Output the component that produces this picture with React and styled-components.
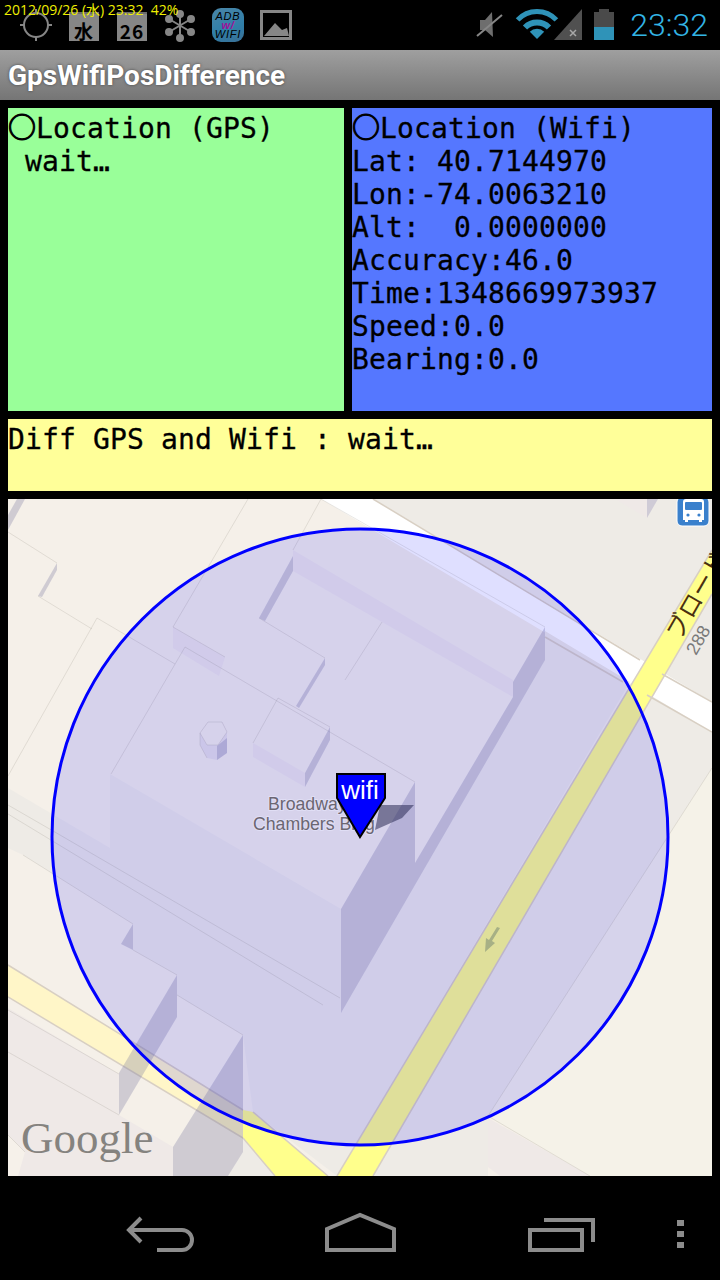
import React from 'react';
import styled, { createGlobalStyle } from 'styled-components';

const GlobalStyle = createGlobalStyle`
  html, body {
    margin: 0;
    padding: 0;
    background-color: #000;
  }
`;

const ICON_GREY = '#868686';
const HOLO_BLUE = '#2f93b8';
const ROAD_EDGE = '#d8cfc3';
const ROOF_LINE = 'rgba(120, 110, 100, 0.16)';
const SHADE = 'rgba(120, 120, 160, 0.3)';

const fills = [
  ['#eeebe6', '373,499 712,499 712,702'],
  ['#eeebe6', '712,730 712,768 488,1116 488,1176 350,1176 640,680'],
  ['#f5f2e8', '712,768 712,1176 590,1176 488,1116'],
  ['#efe9e7', '488,1118 590,1176 500,1176 488,1167'],
  ['#efe9e7', '615,499 647,499 647,518'],
  ['#cfcbd6', '647,499 658,499 647,518'],
  ['#ffffff', '321,499 373,499 712,702 712,732'],
  ['#eeebe6', '8,788 110,848 110,774 341,909 341,1013 545,660 545,631 630,682 337,1176 253,1112 243,1035 177,995 177,975 133,950 133,924 23,855 8,848'],
  ['#efe9e7', '173,627 173,648 219,676 225,657'],
  ['#efe9e7', '293,550 513,680 513,697 293,571'],
  ['#efe9e7', '253,743 305,773 305,787 253,757'],
  ['#efe9e7', '8,1008 119,1074 119,1115 173,1147 173,1176 8,1176'],
  ['#f6f1ea', '8,1135 25,1152 18,1176 8,1176'],
  ['#fff6c8', '8,965 243,1110 243,1138 8,997'],
  ['#ffff8c', '243,1110 253,1112 328,1176 275,1176 243,1138'],
  ['#eeebe6', '243,1138 275,1176 228,1176 243,1152'],
  ['#ffff8c', '712,550 712,594 373,1176 337,1176'],
  ['#e9e3e6', '200,733 208,722 222,722 227,732 227,753 217,760 207,758 200,745'],
  ['#f5f0e9', '200,733 208,722 222,722 227,732 218,745 207,745'],
];

const shades = [
  '341,909 415,782 415,863 513,697 513,682 545,627 545,660 341,1013',
  '119,1073 177,975 177,1017 119,1115',
  '173,1147 243,1035 243,1152 228,1176 173,1176',
  '121,944 133,924 133,950',
  '293,556 293,571 265,621 259,618',
  '325,658 325,665 299,708 296,706',
  '330,727 330,740 305,787 305,773',
  '57,563 57,570 42,597 38,596',
  '8,515 17,499 25,499 8,530',
  '217,746 227,738 227,753 217,760',
];

const roofLines = [
  '248,499 173,627',
  '293,550 321,499',
  '321,499 545,627',
  '173,627 225,657',
  '185,647 415,782',
  '185,647 111,774',
  '259,618 325,658',
  '382,622 345,680',
  '278,698 330,727',
  '278,698 253,743',
  '8,532 57,563',
  '38,596 92,629',
  '97,618 8,776',
  '97,618 175,664',
  '60,835 340,998',
  '8,805 60,835',
  '8,814 323,1005',
  '23,855 133,924',
  '133,950 177,975',
  '177,995 243,1035',
  '8,1052 119,1115',
  '8,1010 119,1074',
  '712,768 488,1116',
  '488,1116 590,1176',
  '8,1135 25,1152',
  '200,745 200,733 208,722 222,722 227,732 218,745 207,745 200,733',
  '200,745 207,758',
];

const roadEdges = [
  '373,499 640,660',
  '662,674 712,702',
  '545,637 623,682',
  '647,695 712,732',
  '712,550 337,1176',
  '712,594 373,1176',
  '8,965 243,1110',
  '8,997 243,1138',
  '253,1112 328,1176',
  '243,1138 275,1176',
];

const gpsLines = [
  'Location (Wifi)',
  'Lat: 40.7144970',
  'Lon:-74.0063210',
  'Alt:  0.0000000',
  'Accuracy:46.0',
  'Time:1348669973937',
  'Speed:0.0',
  'Bearing:0.0',
];

function StatusIcons() {
  return (
    <LeftIcons>
      <Slot>
        <svg width='48' height='50' viewBox='12 0 48 50' fill='none' stroke={ICON_GREY} strokeWidth='2'>
          <circle cx='36' cy='25' r='12' />
          <path d='M36 9v4M36 37v4M20 25h4M48 25h4' />
        </svg>
      </Slot>
      <Slot>
        <CalendarBadge>水</CalendarBadge>
      </Slot>
      <Slot>
        <CalendarBadge>26</CalendarBadge>
      </Slot>
      <Slot>
        <svg width='48' height='50' viewBox='156 0 48 50' stroke={ICON_GREY} strokeWidth='2' fill={ICON_GREY}>
          <path d='M180 14v24M169 19l22 13M169 32l22-13' />
          <circle cx='180' cy='14' r='3' />
          <circle cx='180' cy='38' r='3' />
          <circle cx='169' cy='19' r='3' />
          <circle cx='191' cy='19' r='3' />
          <circle cx='169' cy='32' r='3' />
          <circle cx='191' cy='32' r='3' />
        </svg>
      </Slot>
      <Slot>
        <AdbBadge>
          <span>ADB</span>
          <AdbMark>w/</AdbMark>
          <span>WIFI</span>
        </AdbBadge>
      </Slot>
      <Slot>
        <svg width='48' height='50' viewBox='252 0 48 50'>
          <rect x='261.5' y='11.5' width='29' height='27' fill='none' stroke={ICON_GREY} strokeWidth='3' />
          <path d='M264 36l11-13 7 7 5-2 2 8z' fill={ICON_GREY} />
        </svg>
      </Slot>
    </LeftIcons>
  );
}

function SystemIcons() {
  return (
    <RightIcons>
      <svg width='48' height='50' viewBox='465 0 48 50'>
        <path d='M480 20h5l7-8 1 25-8-7h-5z' fill='#6e6e6e' />
        <path d='M477 36l25-21' stroke={ICON_GREY} strokeWidth='2' />
      </svg>
      <svg width='44' height='50' viewBox='513 0 44 50' overflow='visible' fill='none' stroke={HOLO_BLUE}>
        <path d='M517.6 19.9a26.5 26.5 0 0 1 38.8 0' strokeWidth='5' />
        <path d='M525 27.5a17 17 0 0 1 24 0' strokeWidth='6' />
        <path d='M537 39l-7.2-7.2a10 10 0 0 1 14.4 0z' fill={HOLO_BLUE} stroke='none' />
      </svg>
      <svg width='28' height='50' viewBox='557 0 28 50' overflow='visible'>
        <path d='M582 9v31h-28z' fill='#505050' />
        <path d='M570 30l6 6M576 30l-6 6' stroke='#a8a8a8' strokeWidth='1.5' />
      </svg>
      <svg width='40' height='50' viewBox='585 0 40 50'>
        <path d='M599 9h10v3h5v15h-20v-15h5z' fill='#4a4a4a' />
        <rect x='594' y='27' width='20' height='13' fill={HOLO_BLUE} />
      </svg>
      <Clock>23:32</Clock>
    </RightIcons>
  );
}

function MapView() {
  return (
    <MapPanel>
      <svg width='704' height='677' viewBox='8 499 704 677'>
        <rect x='8' y='499' width='704' height='677' fill='#f5f0e9' />
        {fills.map(([color, points]) => (
          <polygon key={points} points={points} fill={color} />
        ))}
        {roadEdges.map((points) => (
          <polyline key={points} points={points} fill='none' stroke={ROAD_EDGE} strokeWidth='1.5' />
        ))}
        {roofLines.map((points) => (
          <polyline key={points} points={points} fill='none' stroke={ROOF_LINE} />
        ))}
        {shades.map((points) => (
          <polygon key={points} points={points} fill={SHADE} />
        ))}
        <RoadLabel transform='translate(680 641) rotate(-60)'>ブロード</RoadLabel>
        <RoadNumber transform='translate(696 656) rotate(-60)'>288</RoadNumber>
        <polygon points='380,805 414,805 402,818 375,830' fill='rgba(50, 50, 60, 0.55)' />
        <circle cx='360' cy='837' r='308' fill='rgba(0, 0, 255, 0.125)' stroke='#0000ff' strokeWidth='3' />
        <BuildingLabel x='268' y='810'>Broadway</BuildingLabel>
        <BuildingLabel x='253' y='830'>Chambers Bldg</BuildingLabel>
        <path d='M500 928l-8 13 3 2-10 9 1-14 3 2 8-13z' fill='#a7b085' />
        <polygon points='337,774 385,774 385,798 360,837 337,798' fill='#0000ff' stroke='#000' strokeWidth='2' />
        <MarkerText x='360' y='799'>wifi</MarkerText>
        <GoogleMark x='21' y='1153'>Google</GoogleMark>
        <rect x='677' y='497' width='32' height='29' rx='5' fill='#3a80cc' stroke='#fff' />
        <path d='M686 499h15q3 0 3 3v18h-2v2h-3v-2h-11v2h-3v-2h-2v-18q0-3 3-3z' fill='#fff' />
        <rect x='685' y='502' width='17' height='8' rx='1' fill='#3a80cc' />
        <circle cx='688' cy='515' r='1.6' fill='#3a80cc' />
        <circle cx='699' cy='515' r='1.6' fill='#3a80cc' />
      </svg>
    </MapPanel>
  );
}

function App() {
  return (
    <>
      <GlobalStyle />
      <Screen>
        <StatusBar>
          <StatusIcons />
          <SystemIcons />
          <DateOverlay>2012/09/26 (水) 23:32  42%</DateOverlay>
        </StatusBar>
        <TitleBar>GpsWifiPosDifference</TitleBar>
        <Content>
          <Panels>
            <InfoPanel $color='#99ff99'>
              <InfoLine>
                <Ring>○</Ring>Location (GPS)
              </InfoLine>
              <InfoLine> wait…</InfoLine>
            </InfoPanel>
            <InfoPanel $color='#5577ff'>
              {gpsLines.map((line, i) => (
                <InfoLine key={line}>
                  {i === 0 && <Ring>○</Ring>}
                  {line}
                </InfoLine>
              ))}
            </InfoPanel>
          </Panels>
          <DiffPanel>
            <InfoLine>Diff GPS and Wifi : wait…</InfoLine>
          </DiffPanel>
          <MapView />
        </Content>
        <NavBar>
          <svg width='720' height='104' viewBox='0 1176 720 104' fill='none' stroke='#8c8c8c' strokeWidth='4'>
            <path d='M141 1218l-12 12 12 12M130 1230h52a10 10 0 0 1 0 20h-25' />
            <path d='M327 1250v-21l33-14 34 14v21z' />
            <path d='M530 1230h52v20h-52z' />
            <path d='M544 1220h49v22' />
            <path d='M677 1223h7M677 1234h7M677 1245h7' strokeWidth='6' />
          </svg>
        </NavBar>
      </Screen>
    </>
  );
}

const Screen = styled.div`
  display: flex;
  flex-direction: column;
  width: 720px;
  height: 1280px;
  overflow: hidden;
  background-color: #000;
`;

const StatusBar = styled.header`
  position: relative;
  display: flex;
  justify-content: space-between;
  height: 50px;
  background-color: #000;
`;

const LeftIcons = styled.div`
  display: flex;
  padding-left: 12px;
`;

const Slot = styled.div`
  display: flex;
  justify-content: center;
  width: 48px;
  height: 50px;
`;

const CalendarBadge = styled.div`
  width: 30px;
  height: 29px;
  margin-top: 12px;
  padding-top: 6px;
  border-top: 2px solid #6c6c6c;
  box-sizing: border-box;
  background-color: ${ICON_GREY};
  color: #000;
  font-family: 'Noto Sans CJK JP', 'Liberation Sans', sans-serif;
  font-size: 19px;
  font-weight: 700;
  letter-spacing: 1px;
  line-height: 21px;
  text-align: center;
`;

const AdbBadge = styled.div`
  display: flex;
  flex-direction: column;
  align-items: center;
  width: 32px;
  height: 34px;
  margin-top: 8px;
  padding-top: 4px;
  box-sizing: border-box;
  border-radius: 9px;
  background: linear-gradient(160deg, #4a86a8, #2f7ea8 60%, #3a6f95);
  color: #000;
  font-family: 'Liberation Sans', sans-serif;
  font-size: 11px;
  font-style: italic;
  letter-spacing: 0.8px;
  line-height: 9px;
`;

const AdbMark = styled.span`
  color: #a0109a;
  font-weight: 700;
`;

const RightIcons = styled.div`
  display: flex;
  padding-right: 12px;
`;

const Clock = styled.span`
  width: 83px;
  color: #33b5e5;
  font-family: Roboto, sans-serif;
  font-size: 32px;
  font-weight: 300;
  line-height: 51px;
  text-align: right;
`;

const DateOverlay = styled.span`
  position: absolute;
  top: 1px;
  left: 4px;
  color: #efef00;
  font-family: 'Open Sans', 'Noto Sans CJK JP', sans-serif;
  font-size: 14px;
  line-height: 18px;
  white-space: pre;
`;

const TitleBar = styled.h1`
  height: 50px;
  margin: 0;
  padding-left: 8px;
  background: linear-gradient(#9f9f9f, #757575);
  color: #fff;
  font-family: Roboto, sans-serif;
  font-size: 28px;
  font-weight: 700;
  line-height: 52px;
  text-shadow: 0 0 3px #444;
`;

const Content = styled.main`
  display: flex;
  flex-direction: column;
  gap: 8px;
  padding: 8px 8px 0;
`;

const Panels = styled.section`
  display: grid;
  grid-template-columns: 336px 360px;
  gap: 8px;
  height: 303px;
`;

const InfoPanel = styled.div`
  background-color: ${(props) => props.$color};
`;

const InfoLine = styled.div`
  height: 33px;
  color: #000;
  font-family: 'DejaVu Sans Mono', monospace;
  font-size: 28px;
  letter-spacing: 0.14px;
  line-height: 42px;
  white-space: pre;
  -webkit-text-stroke: 0.3px #000;
`;

const Ring = styled.span`
  font-family: 'Noto Sans CJK JP', sans-serif;
  font-weight: 700;
  letter-spacing: 0;
  line-height: 1;
  -webkit-text-stroke: 1px #000;
`;

const DiffPanel = styled.div`
  height: 72px;
  background-color: #ffff99;
`;

const MapPanel = styled.section`
  height: 677px;
  line-height: 0;
`;

const BuildingLabel = styled.text`
  fill: #6b6672;
  stroke: rgba(235, 235, 255, 0.5);
  stroke-width: 2px;
  paint-order: stroke;
  font-family: 'Liberation Sans', sans-serif;
  font-size: 17.7px;
`;

const RoadLabel = styled.text`
  fill: #4a2f10;
  font-family: 'Noto Sans CJK JP', sans-serif;
  font-size: 24px;
`;

const RoadNumber = styled.text`
  fill: #7a7a7a;
  font-family: 'Liberation Sans', sans-serif;
  font-size: 18px;
`;

const MarkerText = styled.text`
  fill: #fff;
  font-family: 'Liberation Sans', sans-serif;
  font-size: 26px;
  text-anchor: middle;
`;

const GoogleMark = styled.text`
  fill: #85837f;
  font-family: 'Liberation Serif', serif;
  font-size: 45px;
`;

const NavBar = styled.nav`
  height: 104px;
  margin-top: auto;
  line-height: 0;
`;

export default App;
